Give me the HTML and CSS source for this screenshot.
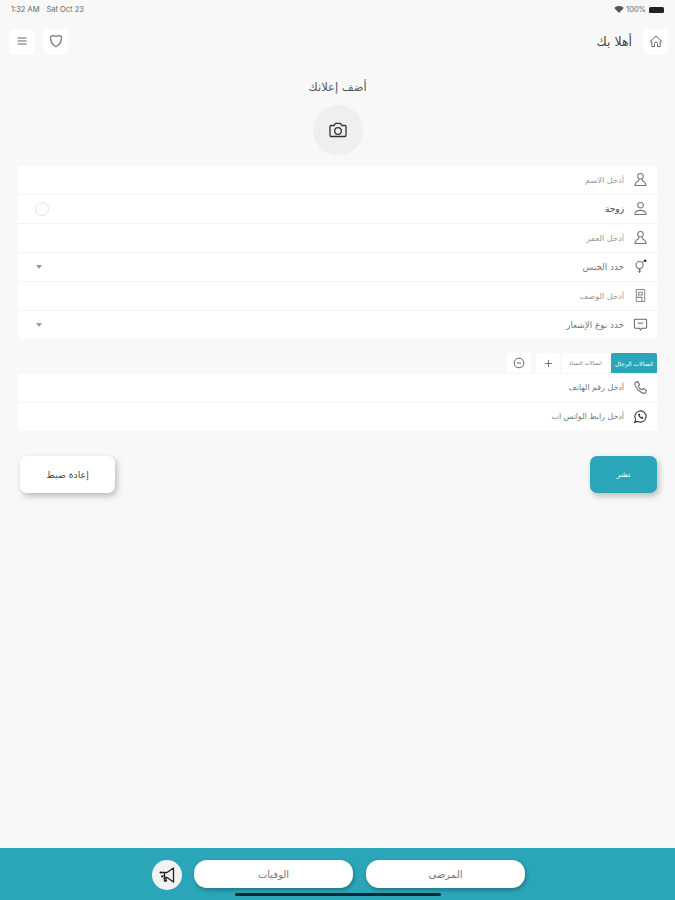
FILE: index.html
```html
<!DOCTYPE html>
<html lang="ar">
<head>
<meta charset="utf-8">
<title>أضف إعلانك</title>
<link rel="stylesheet" href="styles.css">
</head>
<body>
<div class="page">
  <div class="status" dir="ltr">
    <span class="status-time"><span>1:32 AM</span><span>Sat Oct 23</span></span>
    <span class="status-right">
      <svg class="wifi" viewBox="0 0 12 9"><path d="M6 9 0 2.600C3.400-.8 8.600-.8 12 2.600z" fill="#555"/></svg>
      <span>100%</span>
      <span class="battery"></span>
    </span>
  </div>

  <header class="header" dir="ltr">
    <div class="header-group">
      <div class="icon-btn">
        <svg class="i16" viewBox="0 0 16 16" fill="none" stroke="#666" stroke-width="1.100"><path d="M3.500 5h9M3.500 8h9M3.500 11h9"/></svg>
      </div>
      <div class="icon-btn">
        <svg class="i16" viewBox="0 0 16 16" fill="none" stroke="#777" stroke-width="1.200" stroke-linejoin="round"><path d="M8 3.500c1.800-1 3.800-1 5.300-.2.500 4.500-1.500 8.500-5.300 10.500C4.200 11.800 2.200 7.800 2.700 3.300 4.200 2.500 6.200 2.500 8 3.500z"/></svg>
      </div>
    </div>
    <div class="header-group header-home">
      <span class="welcome">أهلا بك</span>
      <div class="icon-btn">
        <svg class="i16" viewBox="0 0 16 16" fill="none" stroke="#666" stroke-width="1" stroke-linejoin="round" stroke-linecap="round"><path d="M2 8.500 8 3l6 5.500M3.800 8v5.500h2.700v-3a1.500 1.500 0 0 1 3 0v3h2.700V8"/></svg>
      </div>
    </div>
  </header>

  <h1 class="title">أضف إعلانك</h1>
  <div class="camera">
    <svg class="i20" viewBox="0 0 20 20" fill="none" stroke="#333" stroke-width="1.300" stroke-linejoin="round"><path d="M2 6.500c0-.6.400-1 1-1h3.200l1.300-2.200h5l1.300 2.200H17c.6 0 1 .4 1 1v9c0 .6-.4 1-1 1H3c-.6 0-1-.4-1-1z"/><circle cx="10" cy="11" r="3.300"/></svg>
  </div>

  <section class="card">
    <div class="row">
      <svg class="row-icon" viewBox="0 0 16 16" fill="none" stroke="#777" stroke-width="1.100" stroke-linejoin="round"><circle cx="8" cy="4.500" r="3"/><path d="M6.500 7.300 6 9.300C4 10 2.500 11.500 2 14.500h12c-.5-3-2-4.500-4-5.200l-.5-2"/></svg>
      <span class="hint">أدخل الاسم</span>
    </div>
    <div class="row">
      <svg class="row-icon" viewBox="0 0 16 16" fill="none" stroke="#777" stroke-width="1.100" stroke-linejoin="round"><circle cx="8" cy="4.500" r="3"/><path d="M2 14.500c0-3 2-4.500 6-4.500s6 1.500 6 4.500z"/></svg>
      <span class="value">زوجة</span>
      <span class="radio"></span>
    </div>
    <div class="row">
      <svg class="row-icon" viewBox="0 0 16 16" fill="none" stroke="#777" stroke-width="1.100" stroke-linejoin="round"><circle cx="8" cy="4.500" r="3"/><path d="M6.500 7.300 6 9.300C4 10 2.500 11.500 2 14.500h12c-.5-3-2-4.500-4-5.200l-.5-2"/></svg>
      <span class="hint">أدخل العمر</span>
    </div>
    <div class="row">
      <svg class="row-icon" viewBox="0 0 16 16" fill="none" stroke="#777" stroke-width="1.200"><circle cx="7" cy="6.500" r="3.800"/><path d="M7 10.300v4.700M5 12.800h4M10 3.500l2-1.500"/><circle cx="13" cy="1.800" r="1.300" fill="#222" stroke="none"/></svg>
      <span class="select-hint">حدد الجنس</span>
      <span class="caret"></span>
    </div>
    <div class="row">
      <svg class="row-icon" viewBox="0 0 16 16" fill="none" stroke="#888" stroke-width="1.100"><rect x="3.500" y="1.500" width="9" height="13" rx="1"/><path d="M6 4.500h4v3H6zM3.500 10h6v4.500"/></svg>
      <span class="hint">أدخل الوصف</span>
    </div>
    <div class="row">
      <svg class="row-icon" viewBox="0 0 16 16" fill="none" stroke="#666" stroke-width="1.100" stroke-linejoin="round"><path d="M2.500 2.500h11c.6 0 1 .4 1 1v7.500c0 .6-.4 1-1 1H9l-1 2-1-2H2.500c-.6 0-1-.4-1-1V3.500c0-.6.400-1 1-1z"/><path d="M5 6.500h6"/></svg>
      <span class="select-hint">حدد نوع الإشعار</span>
      <span class="caret"></span>
    </div>
  </section>

  <div class="tabs">
    <span class="tab tab-active">اتصالات الرجال</span>
    <span class="tab">اتصالات النساء</span>
    <span class="tab-btn">
      <svg class="i10" viewBox="0 0 10 10" stroke="#666" stroke-width="1"><path d="M5 1v8M1 5h8"/></svg>
    </span>
    <span class="tab-btn">
      <svg class="i12" viewBox="0 0 12 12" fill="none" stroke="#666" stroke-width="1"><circle cx="6" cy="6" r="4.800"/><path d="M3.800 6h4.400"/></svg>
    </span>
  </div>

  <section class="card card-contact">
    <div class="row">
      <svg class="row-icon" viewBox="0 0 16 16" fill="none" stroke="#666" stroke-width="1.100"><path d="M2.500 2.500 5 1.800 7 5 5.500 6.500C6 8 8 10 9.500 10.500L11 9l3.200 2-.7 2.500c-.8 1-2.500.8-4.500-.2C6 11.800 3.800 9.500 2.400 6.300 1.800 4.800 1.800 3.400 2.500 2.500z"/></svg>
      <span class="contact-hint">أدخل رقم الهاتف</span>
    </div>
    <div class="row">
      <svg class="row-icon" viewBox="0 0 16 16" fill="none" stroke="#333" stroke-width="1.200"><path d="M1.800 14.200 2.800 11A6 6 0 1 1 5 13.200z"/><path d="M5.500 5.500c0 2.500 2.500 5 5 5l.8-1.500-1.800-1-.8.700c-.7-.3-1.300-1-1.600-1.600l.7-.8-1-1.800z" fill="#333" stroke="none"/></svg>
      <span class="contact-hint">أدخل رابط الواتس اب</span>
    </div>
  </section>

  <div class="actions">
    <button class="btn btn-primary">نشر</button>
    <button class="btn btn-reset">إعادة ضبط</button>
  </div>

  <footer class="footer">
    <button class="pill">المرضى</button>
    <button class="pill">الوفيات</button>
    <span class="megaphone">
      <svg class="i20" viewBox="0 0 20 20" fill="none" stroke="#222" stroke-width="1.300" stroke-linejoin="round"><path d="M16.500 3v14L10 12.500H7.500v-5H10z"/><path d="M8.500 12.500 9.500 16H7.500L7 12.500"/><circle cx="3.500" cy="7.500" r="1" fill="#222" stroke="none"/><circle cx="5" cy="11.500" r="1" fill="#222" stroke="none"/><path d="M4 7.500h3M5 11.500l2-1"/></svg>
    </span>
    <span class="home-indicator"></span>
  </footer>
</div>
</body>
</html>
```

FILE: styles.css
```css
* {
  box-sizing: border-box;
}

html,
body {
  margin: 0;
  padding: 0;
}

body {
  background: #f8f8f8;
  font-family: "DejaVu Sans", "Liberation Sans", sans-serif;
  color: #333;
}

.page {
  position: relative;
  width: 675px;
  height: 900px;
  overflow: hidden;
  display: flex;
  flex-direction: column;
  direction: rtl;
}

.status {
  height: 16px;
  padding: 3px 11px 0 11px;
  display: flex;
  justify-content: space-between;
  align-items: center;
  font-family: "Inter", "Liberation Sans", sans-serif;
  font-size: 7.500px;
  color: #666;
  flex: none;
}

.status-time {
  display: flex;
  gap: 7px;
}

.status-right {
  display: flex;
  align-items: center;
  gap: 3px;
}

.wifi {
  width: 10px;
  height: 7px;
  margin-right: -1px;
}

.battery {
  width: 15px;
  height: 6px;
  background: #222;
  border-radius: 1.500px;
}

.header {
  height: 26px;
  margin-top: 12px;
  padding: 0 7px 0 9px;
  display: flex;
  justify-content: space-between;
  align-items: center;
  flex: none;
}

.header-group {
  display: flex;
  align-items: center;
  gap: 9px;
}

.header-home {
  gap: 11px;
}

.icon-btn {
  width: 25px;
  height: 25px;
  background: #fff;
  border-radius: 4px;
  display: flex;
  align-items: center;
  justify-content: center;
}

.i16 {
  width: 16px;
  height: 16px;
}

.i20 {
  width: 20px;
  height: 20px;
}

.i10 {
  width: 9px;
  height: 9px;
}

.i12 {
  width: 12px;
  height: 12px;
}

.welcome {
  font-size: 12.500px;
  color: #444;
}

.title {
  margin: 24px 0 0;
  height: 18px;
  line-height: 18px;
  font-size: 11.500px;
  font-weight: 400;
  text-align: center;
  color: #555;
  flex: none;
}

.camera {
  width: 50px;
  height: 50px;
  margin: 9px auto 0;
  border-radius: 50%;
  background: #efefef;
  display: flex;
  align-items: center;
  justify-content: center;
  flex: none;
}

.card {
  margin: 11px 18px 0;
  background: #fff;
  display: flex;
  flex-direction: column;
  flex: none;
}

.row {
  height: 29px;
  padding: 0 9px 1px 10px;
  display: flex;
  align-items: center;
  gap: 9px;
  border-bottom: 1px solid #f3f3f3;
}

.row:last-child {
  border-bottom: 0;
  height: 28px;
}

.row-icon {
  width: 15px;
  height: 15px;
  flex: none;
}

.hint {
  font-size: 8.200px;
  color: #999;
}

.contact-hint {
  font-size: 7.900px;
  color: #777;
}

.select-hint {
  font-size: 8.800px;
  color: #777;
}

.value {
  font-size: 9px;
  color: #444;
}

.radio {
  width: 14px;
  height: 14px;
  border-radius: 50%;
  border: 1.500px solid #e2e2e2;
  margin-right: auto;
  margin-left: 7px;
}

.caret {
  width: 0;
  height: 0;
  border-left: 3px solid transparent;
  border-right: 3px solid transparent;
  border-top: 4px solid #999;
  margin-right: auto;
  margin-left: 8px;
}

.tabs {
  margin: 14px 18px 0;
  height: 20px;
  display: flex;
  align-items: stretch;
  gap: 2px;
  flex: none;
}

.tab {
  width: 47px;
  display: flex;
  align-items: center;
  justify-content: center;
  font-size: 5.300px;
  background: #fff;
  color: #777;
  white-space: nowrap;
}

.tab-active {
  width: 46px;
  background: #2ba6b8;
  color: #fff;
  font-size: 6px;
  border-radius: 2px 2px 0 0;
}

.tab-btn {
  width: 24px;
  background: #fff;
  display: flex;
  align-items: center;
  justify-content: center;
}

.tab-btn:last-child {
  margin-right: 3px;
}

.card-contact {
  margin-top: 1px;
}

.actions {
  margin: 25px 18px 0 18px;
  display: flex;
  justify-content: space-between;
  align-items: center;
  flex: none;
}

.btn {
  border: 0;
  font-family: inherit;
  height: 37px;
  border-radius: 7px;
  font-size: 8px;
  box-shadow: 2px 3px 6px rgba(0, 0, 0, .25);
}

.btn-primary {
  width: 67px;
  background: #2ba6b8;
  color: #fff;
}

.btn-reset {
  width: 95px;
  background: #fff;
  color: #444;
  font-size: 9.300px;
  margin-left: 2px;
}

.footer {
  margin-top: auto;
  height: 52px;
  background: #2ba6b8;
  padding: 12px 150px 0 0;
  display: flex;
  align-items: flex-start;
  gap: 13px;
  position: relative;
  flex: none;
}

.pill {
  width: 159px;
  height: 28px;
  border: 0;
  border-radius: 13px;
  background: #fff;
  font-family: inherit;
  font-size: 10px;
  color: #777;
  box-shadow: 1px 2px 4px rgba(0, 0, 0, .3);
}

.megaphone {
  width: 30px;
  height: 30px;
  margin-right: -1px;
  border-radius: 50%;
  background: #f2f2f2;
  display: flex;
  align-items: center;
  justify-content: center;
  flex: none;
}

.home-indicator {
  position: absolute;
  left: 235px;
  bottom: 4px;
  width: 206px;
  height: 3px;
  border-radius: 2px;
  background: #10282c;
}
```
